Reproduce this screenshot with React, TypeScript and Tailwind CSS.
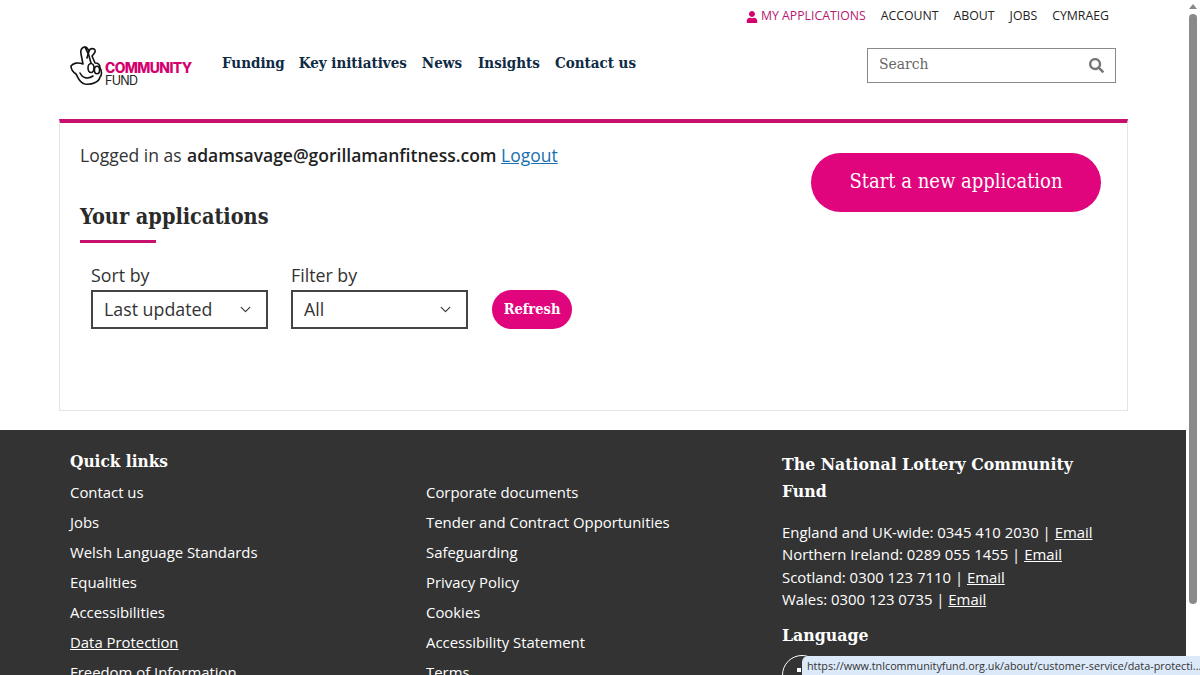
import { ChevronDown } from "lucide-react";
import { FaSearch, FaUser } from "react-icons/fa";

const sans = "font-['Open_Sans','Noto_Sans',sans-serif]";
const slab = "font-['DejaVu_Serif_Condensed','DejaVu_Serif',serif]";

const leftLinks = ["Contact us", "Jobs", "Welsh Language Standards", "Equalities", "Accessibilities", "Data Protection", "Freedom of Information"];
const midLinks = ["Corporate documents", "Tender and Contract Opportunities", "Safeguarding", "Privacy Policy", "Cookies", "Accessibility Statement", "Terms"];
const contacts = ["England and UK-wide: 0345 410 2030", "Northern Ireland: 0289 055 1455", "Scotland: 0300 123 7110", "Wales: 0300 123 0735"];

function Logo() {
    return (
        <div className="flex items-start w-[122px] h-[42px]">
            <svg width="33" height="40" viewBox="0 0 33 40" fill="none" stroke="#111" strokeWidth="1.6" strokeLinejoin="round" strokeLinecap="round" className="shrink-0">
                <path d="M13 18 L11 8 C10 4 12 1 15 1 C17 1 18 3 19 5 C20 2 24 2 25 4 C26 6 24 8 22 10 L25 17 C28 17 30 19 30 22 C32 25 32 29 30 31 C29 36 22 39 15 38 C9 37 8 31 6 28 C3 26 1 23 1 20 C3 17 8 16 13 18" />
                <path d="M15 1 C18 6 20 12 21 17" />
                <path d="M19 5 L17 12" />
                <ellipse cx="21" cy="22" rx="3" ry="4.5" />
                <ellipse cx="27" cy="24" rx="2.6" ry="3.8" />
                <path d="M10 27 C13 33 19 33 23 30" />
            </svg>
            <div className="font-['Inter',sans-serif] ml-[2px] mt-[15px]">
                <div className="text-[#d4006f] text-[13.9px] leading-[14px] font-extrabold tracking-[-0.6px]">COMMUNITY</div>
                <div className="text-[#222] text-[12.5px] leading-[12px] tracking-[-0.7px]">FUND</div>
            </div>
        </div>
    );
}

function Dropdown({ label, value }: { label: string; value: string }) {
    return (
        <div className="flex flex-col">
            <label className="text-[17.8px] leading-[26px] mb-[2px] text-[#333]">{label}</label>
            <div className="w-[177px] h-[39px] border-2 border-[#444] flex items-center justify-between pl-[11px] pr-[12px] pb-[1px] text-[17.8px] text-[#333]">
                <span>{value}</span>
                <ChevronDown size={17} strokeWidth={1.6} />
            </div>
        </div>
    );
}

export default function App() {
    return (
        <div className={`relative flex h-[675px] w-[1200px] overflow-hidden bg-white ${sans}`}>
            <div className="w-[1186px] h-[675px] overflow-hidden shrink-0">
                <header className="h-[119px]">
                    <nav className="flex justify-end items-center gap-[15px] h-[33px] pr-[77px] text-[12.3px] text-[#222]">
                        <a className="flex items-center gap-[3px] text-[#b5176f]">
                            <FaUser size={12} className="text-[#d4006f]" />
                            MY APPLICATIONS
                        </a>
                        <a>ACCOUNT</a>
                        <a>ABOUT</a>
                        <a>JOBS</a>
                        <a>CYMRAEG</a>
                    </nav>
                    <div className="flex items-start pl-[70px] pr-[70px]">
                        <div className="mt-[13px]"><Logo /></div>
                        <div className={`flex gap-[15px] ml-[30px] mt-[19px] text-[15px] font-bold text-[#0f2a44] ${slab}`}>
                            <a>Funding</a>
                            <a className="-ml-[1px]">Key initiatives</a>
                            <a>News</a>
                            <a className="ml-[1px]">Insights</a>
                            <a>Contact us</a>
                        </div>
                        <div className="ml-auto mt-[15px] w-[249px] h-[35px] border border-[#8a8a8a] flex items-center justify-between pl-[11px] pr-[11px] pb-[2px]">
                            <span className={`text-[15.5px] text-[#666] ${slab}`}>Search</span>
                            <FaSearch size={15} className="text-[#777] mt-[2px]" />
                        </div>
                    </div>
                </header>

                <main className="ml-[59px] mr-[58px] h-[292px] border border-[#e4e4e4] border-t-[4px] border-t-[#c8116f] px-[20px] flex justify-between">
                    <div>
                        <p className="text-[17.5px] text-[#333] mt-[19px] leading-[26px]">
                            Logged in as <b className="font-semibold text-[#222] ml-[1px]">adamsavage@gorillamanfitness.com</b>{" "}
                            <a className="underline text-[#1a6fb0]">Logout</a>
                        </p>
                        <h2 className={`text-[21.5px] font-bold text-[#2a2a2a] mt-[34px] leading-[30px] ${slab}`}>Your applications</h2>
                        <div className="w-[76px] h-[3px] bg-[#c8116f] mt-[8px]" />
                        <div className="flex items-end gap-[23px] ml-[11px] mt-[19px]">
                            <Dropdown label="Sort by" value="Last updated" />
                            <Dropdown label="Filter by" value="All" />
                            <button className={`w-[80px] h-[39px] ml-[1px] pb-[2px] rounded-full bg-[#e0057c] text-white text-[14.5px] font-bold ${slab}`}>Refresh</button>
                        </div>
                    </div>
                    <button className={`w-[290px] h-[59px] mt-[30px] mr-[6px] pb-[3px] rounded-full bg-[#e0057c] text-white text-[20px] ${slab}`}>Start a new application</button>
                </main>

                <footer className="mt-[19px] h-[245px] bg-[#333333] text-white pl-[70px] pr-[70px] flex text-[14.9px]">
                    <div className="w-[356px] shrink-0">
                        <h3 className={`text-[17.1px] font-bold mt-[18px] leading-[27px] ${slab}`}>Quick links</h3>
                        <ul className="mt-[3px]">
                            {leftLinks.map((link) => (
                                <li key={link} className={`h-[30px] leading-[29px] ${link === "Data Protection" ? "underline" : ""}`}>{link}</li>
                            ))}
                        </ul>
                    </div>
                    <div className="w-[356px] shrink-0 pt-[48px]">
                        <ul>
                            {midLinks.map((link) => (
                                <li key={link} className="h-[30px] leading-[29px]">{link}</li>
                            ))}
                        </ul>
                    </div>
                    <div className="w-[320px] shrink-0">
                        <h3 className={`text-[17.5px] font-bold mt-[21px] leading-[27px] ${slab}`}>The National Lottery Community Fund</h3>
                        <div className="mt-[15.5px] text-[14.9px]">
                            {contacts.map((c) => (
                                <p key={c} className="h-[22.5px] leading-[22.5px] whitespace-nowrap">{c} | <a className="underline">Email</a></p>
                            ))}
                        </div>
                        <h3 className={`text-[17.5px] font-bold mt-[11px] leading-[27px] ${slab}`}>Language</h3>
                        <div className="mt-[6px] w-[40px] h-[40px] rounded-full border border-white pl-[14px] pt-[12px]">
                            <div className="w-[4px] h-[4px] bg-white" />
                        </div>
                    </div>
                </footer>
            </div>

            <div className="w-[14px] h-[675px] bg-white flex flex-col items-center pt-[4px]">
                <div className="w-0 h-0 border-x-[4px] border-x-transparent border-b-[5px] border-b-[#888]" />
                <div className="w-[8px] h-[590px] mt-[5px] rounded-full bg-[#8a8a8a]" />
            </div>

            <div className="absolute right-0 bottom-0 w-[398px] h-[19px] bg-[#dce9f9] rounded-tl-[6px] pl-[5px] text-[10.8px] leading-[19px] text-[#333] whitespace-nowrap overflow-hidden">
                https://www.tnlcommunityfund.org.uk/about/customer-service/data-protecti...
            </div>
        </div>
    );
}
